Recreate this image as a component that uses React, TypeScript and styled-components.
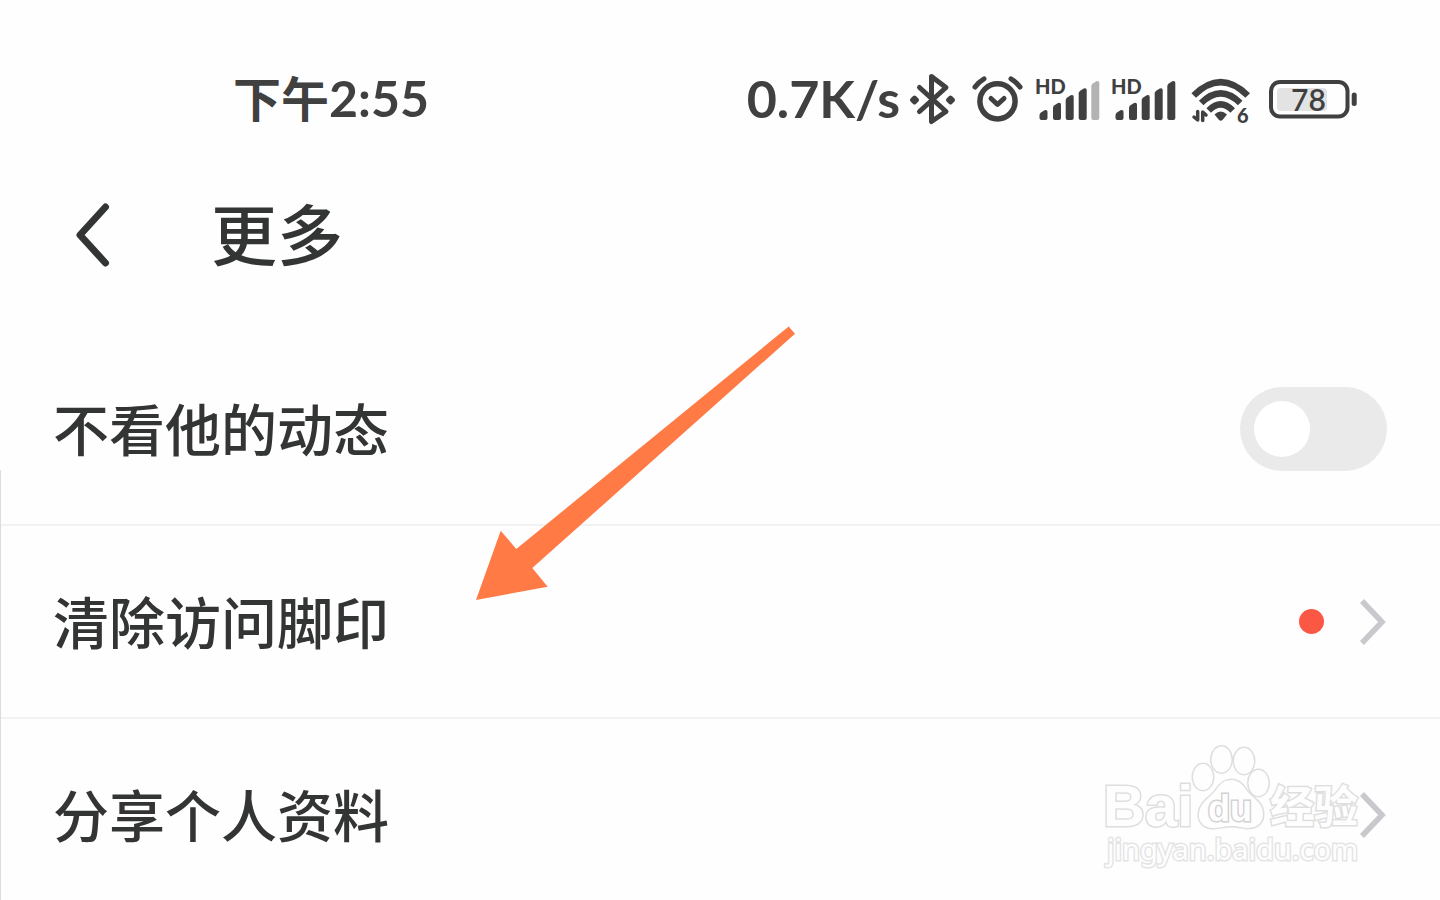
import React from "react";
import styled, { createGlobalStyle } from "styled-components";

const ink = "#333434";
const statusInk = "#404040";

const GlobalStyle = createGlobalStyle`
  * { box-sizing: border-box; }
  body {
    margin: 0;
    background: #fefefe;
    color: ${ink};
    font-family: "Noto Sans CJK SC", sans-serif;
    font-weight: 500;
  }
`;

const Screen = styled.div`
  position: relative;
  height: 100vh;
  overflow: hidden;
`;

const EdgeLine = styled.div`
  position: absolute;
  left: 0;
  top: 470px;
  bottom: 0;
  width: 1px;
  background: #dcdcdc;
`;

const StatusBar = styled.div`
  display: flex;
  align-items: center;
  justify-content: space-between;
  height: 140px;
  padding: 60px 83px 0 233px;
  color: ${statusInk};
  font-family: Lato, "Noto Sans CJK SC", sans-serif;
  font-weight: 700;
`;

const Clock = styled.time`
  padding-bottom: 4px;
  font-size: 50px;
  line-height: 60px;
`;

const ClockPeriod = styled.span`
  font-size: 48px;
`;

const StatusIcons = styled.div`
  display: flex;
  align-items: center;
  gap: 10px;
`;

const Speed = styled.span`
  padding-bottom: 4px;
  font-size: 52px;
  line-height: 60px;
`;

const Glyph = styled.svg`
  display: block;
  flex: none;
  overflow: visible;
`;

const Header = styled.header`
  display: flex;
  align-items: center;
  gap: 101px;
  height: 193px;
  padding: 0 76px 4px;
`;

const BackButton = styled.button`
  display: block;
  padding: 0;
  border: 0;
  background: none;
  color: inherit;
  cursor: pointer;
`;

const Title = styled.h1`
  margin: 0;
  padding-bottom: 8px;
  font-size: 66px;
  line-height: 80px;
  font-weight: 500;
`;

const List = styled.ul`
  margin: 0;
  padding: 0;
  list-style: none;
`;

const Item = styled.li`
  border-bottom: 2px solid #f2f2f2;
`;

const rowLayout = `
  display: flex;
  align-items: center;
  justify-content: space-between;
  width: 100%;
  height: 191px;
  padding: 0 53px;
  font-size: 56px;
  line-height: 80px;
`;

const SwitchRow = styled.label`
  ${rowLayout}
`;

const LinkRow = styled.a`
  ${rowLayout}
  color: inherit;
  text-decoration: none;
`;

const RowText = styled.span`
  padding-bottom: 4px;
`;

const Switch = styled.input`
  appearance: none;
  display: flex;
  align-items: center;
  width: 147px;
  height: 84px;
  margin: 0;
  padding: 0 14px;
  border-radius: 42px;
  background: #eaeaea;
  cursor: pointer;

  &::before {
    content: "";
    width: 56px;
    height: 56px;
    border-radius: 50%;
    background: #fff;
  }
  &:checked {
    justify-content: flex-end;
    background: #ff7a45;
  }
`;

const Trailing = styled.span`
  display: flex;
  align-items: center;
  gap: 36px;
`;

const Dot = styled.span`
  width: 25px;
  height: 25px;
  border-radius: 50%;
  background: #fa5744;
`;

const Pointer = styled.svg`
  position: absolute;
  left: 476px;
  top: 326px;
  pointer-events: none;
`;

const Watermark = styled.svg`
  position: absolute;
  right: 70px;
  top: 740px;
  pointer-events: none;
  overflow: visible;
`;

function Bluetooth() {
  return (
    <Glyph width="49" height="56" viewBox="0 0 49 56" fill="none" stroke={statusInk} strokeWidth="5" strokeLinecap="round" strokeLinejoin="round">
      <path d="M9.5 15.5 L36 39.5 L21.5 49.5 V4.5 L36 15.5 L9.5 39.5" />
      <path d="M4.5 25.5 L7 28 L4.5 30.5 L2 28Z M40.5 25.5 L43 28 L40.5 30.5 L38 28Z" strokeWidth="4" fill={statusInk} />
    </Glyph>
  );
}

function Alarm() {
  return (
    <Glyph width="57" height="56" viewBox="0 0 57 56" fill="none" stroke={statusInk} strokeWidth="5" strokeLinecap="round" strokeLinejoin="round">
      <circle cx="28.5" cy="29.3" r="17.6" strokeWidth="5.5" />
      <path d="M22 26.5 L28.5 32.5 L35 26.5" />
      <path d="M6 15 Q9.500 10 15 6.8 M51 15 Q47.5 10 42 6.8" />
    </Glyph>
  );
}

const bars = [
  { x: 3.5, top: 38 },
  { x: 17, top: 30.7 },
  { x: 29.7, top: 23 },
  { x: 42.7, top: 16.3 },
  { x: 55.3, top: 9 },
];

function Signal({ level }: { level: number }) {
  return (
    <Glyph width="66" height="56" viewBox="0 0 66 56" fill={statusInk}>
      <text x="-1" y="22" fontSize="20" fontWeight="900">HD</text>
      {bars.map(({ x, top }, i) => (
        <path
          key={x}
          fill={i < level ? statusInk : "#b3b3b3"}
          d={`M${x} ${top + 5} Q${x} ${top + 3.5} ${x + 1.5} ${top + 2.5} L${x + 5} ${top + 0.3} Q${x + 8} ${top - 0.6} ${x + 8} ${top + 2} V46 Q${x + 8} 48 ${x + 6} 48 H${x + 2} Q${x} 48 ${x} 46Z`}
        />
      ))}
    </Glyph>
  );
}

function Wifi() {
  return (
    <Glyph width="71" height="56" viewBox="0 0 71 56" fill="none" stroke={statusInk}>
      <g strokeWidth="6.5">
        <path d="M5.7 23.5 Q32.700 -3.5 59.7 23.5" />
        <path d="M13.2 31 Q32.700 11.5 52.2 31" />
        <path d="M20.7 38.5 Q32.700 26.5 44.7 38.5" />
      </g>
      <path fill={statusInk} stroke="none" d="M26.500 42.5 Q32.7 36.5 39 42.5 L34.5 48 Q32.7 49.5 31 48Z" />
      <path strokeWidth="3.5" strokeLinecap="round" strokeLinejoin="round" d="M9.7 39.5 V48 L6 45 M14.7 48.5 V40 L18 43" />
      <text x="49" y="51" fontSize="20" fontWeight="900" fill={statusInk} stroke="none">6</text>
    </Glyph>
  );
}

function Battery() {
  return (
    <Glyph width="88" height="56" viewBox="0 0 88 56">
      <rect x="8" y="16" width="50" height="23" rx="4" fill="#e3e3e3" />
      <rect x="2" y="10" width="76.5" height="34.5" rx="9" fill="none" stroke={statusInk} strokeWidth="4" />
      <rect x="82.7" y="20.5" width="5" height="13.5" rx="2.5" fill={statusInk} />
      <text x="22" y="39" fontSize="30" fontWeight="600" fill={statusInk}>78</text>
    </Glyph>
  );
}

function Chevron() {
  return (
    <Glyph width="27" height="46" viewBox="0 0 27 46" fill="none" stroke="#c8c8cd" strokeWidth="5.5">
      <path d="M2 2 L22 23 L2 44" />
    </Glyph>
  );
}

const toes = [
  { cx: 103, cy: 37, rx: 10, ry: 13 },
  { cx: 121.5, cy: 19.5, rx: 10, ry: 13 },
  { cx: 144, cy: 21, rx: 10, ry: 13 },
  { cx: 158.5, cy: 43, rx: 10, ry: 13 },
];

function BaiduWatermark() {
  return (
    <Watermark width="270" height="140" viewBox="0 0 270 140" fill="#fefefe" stroke="#dededf" strokeWidth="3" paintOrder="stroke">
      <text x="3" y="86" fontSize="58" fontWeight="700" fontFamily="Liberation Sans, sans-serif">Bai</text>
      {toes.map((toe) => (
        <ellipse key={toe.cx} {...toe} />
      ))}
      <path d="M131 40 C139 40 143 45 147 51 C152 58 163 62 163 74 C163 84 156 88 147 88 C140 87 136 86 131 86 C126 86 120 88 113 88 C104 88 98 82 99 73 C100 62 111 57 116 50 C120 44 124 40 131 40Z" />
      <text x="108" y="81" fontSize="36" fontWeight="700" fontFamily="Liberation Sans, sans-serif" stroke="#d2d2d4">du</text>
      <text x="170" y="83" fontSize="44" fontWeight="700" fontFamily="Noto Sans CJK SC, sans-serif">经验</text>
      <text x="7" y="120" fontSize="29" fontWeight="400" fontFamily="Noto Sans, sans-serif" stroke="#e4e4e5">jingyan.baidu.com</text>
    </Watermark>
  );
}

export default function App() {
  return (
    <Screen>
      <GlobalStyle />
      <StatusBar>
        <Clock>
          <ClockPeriod>下午</ClockPeriod>2:55
        </Clock>
        <StatusIcons>
          <Speed>0.7K/s</Speed>
          <Bluetooth />
          <Alarm />
          <Signal level={4} />
          <Signal level={5} />
          <Wifi />
          <Battery />
        </StatusIcons>
      </StatusBar>
      <Header>
        <BackButton type="button" aria-label="返回">
          <Glyph width="34" height="64" viewBox="0 0 34 64" fill="none" stroke={ink} strokeWidth="7" strokeLinecap="round" strokeLinejoin="round">
            <path d="M29.5 4 L4 32 L29.5 60" />
          </Glyph>
        </BackButton>
        <Title>更多</Title>
      </Header>
      <List>
        <Item>
          <SwitchRow>
            <RowText>不看他的动态</RowText>
            <Switch type="checkbox" />
          </SwitchRow>
        </Item>
        <Item>
          <LinkRow href="#footprints">
            <RowText>清除访问脚印</RowText>
            <Trailing>
              <Dot />
              <Chevron />
            </Trailing>
          </LinkRow>
        </Item>
        <Item>
          <LinkRow href="#share">
            <RowText>分享个人资料</RowText>
            <Trailing>
              <Chevron />
            </Trailing>
          </LinkRow>
        </Item>
      </List>
      <EdgeLine />
      <Pointer width="320" height="276" viewBox="0 0 320 276" fill="#ff7a45">
        <path d="M0 274 L24.7 204.7 L40.3 223 L312.7 0.5 L319 7.7 L56.3 242 L71.7 260.7Z" />
      </Pointer>
      <BaiduWatermark />
    </Screen>
  );
}
